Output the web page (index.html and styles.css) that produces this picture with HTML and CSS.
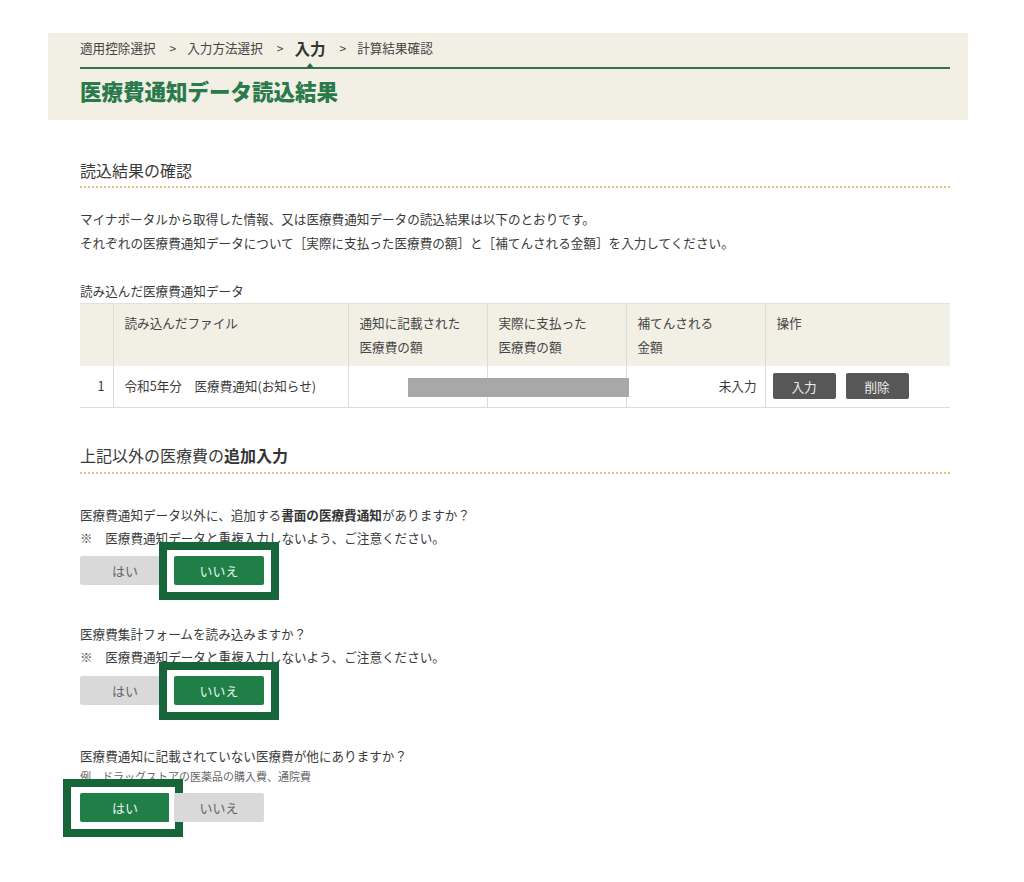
FILE: index.html
```html
<!DOCTYPE html>
<html lang="ja">
<head>
<meta charset="utf-8">
<title>医療費通知データ読込結果</title>
<link rel="stylesheet" href="styles.css">
</head>
<body>
<div class="page">
  <header class="band">
    <nav class="crumbs">
      <span>適用控除選択</span><span class="sep">&gt;</span>
      <span>入力方法選択</span><span class="sep">&gt;</span>
      <span class="current">入力</span><span class="sep">&gt;</span>
      <span>計算結果確認</span>
    </nav>
    <h1 class="title">医療費通知データ読込結果</h1>
  </header>

  <main class="content">
    <h2 class="sec-head">読込結果の確認</h2>
    <p class="lead">マイナポータルから取得した情報、又は医療費通知データの読込結果は以下のとおりです。<br>それぞれの医療費通知データについて［実際に支払った医療費の額］と［補てんされる金額］を入力してください。</p>

    <div class="tbl-label">読み込んだ医療費通知データ</div>
    <table class="tbl">
      <thead>
        <tr>
          <th class="c-no"></th>
          <th class="c-file">読み込んだファイル</th>
          <th class="c-amt">通知に記載された<br>医療費の額</th>
          <th class="c-amt">実際に支払った<br>医療費の額</th>
          <th class="c-amt">補てんされる<br>金額</th>
          <th class="c-op">操作</th>
        </tr>
      </thead>
      <tbody>
        <tr>
          <td class="num">1</td>
          <td>令和5年分　医療費通知(お知らせ)</td>
          <td class="redact-cell"><span class="redact"></span></td>
          <td></td>
          <td class="num">未入力</td>
          <td class="ops"><div class="ops-row"><button class="op-btn">入力</button><button class="op-btn">削除</button></div></td>
        </tr>
      </tbody>
    </table>

    <h2 class="sec-head sec2">上記以外の医療費の<b>追加入力</b></h2>

    <div class="q q1">
      <p class="q-text">医療費通知データ以外に、追加する<b>書面の医療費通知</b>がありますか？</p>
      <p class="q-note">※　医療費通知データと重複入力しないよう、ご注意ください。</p>
      <div class="choices">
        <button class="choice">はい</button>
        <button class="choice on hl">いいえ</button>
      </div>
    </div>

    <div class="q q2">
      <p class="q-text">医療費集計フォームを読み込みますか？</p>
      <p class="q-note">※　医療費通知データと重複入力しないよう、ご注意ください。</p>
      <div class="choices">
        <button class="choice">はい</button>
        <button class="choice on hl">いいえ</button>
      </div>
    </div>

    <div class="q q3">
      <p class="q-text">医療費通知に記載されていない医療費が他にありますか？</p>
      <p class="q-ex">例　ドラッグストアの医薬品の購入費、通院費</p>
      <div class="choices">
        <button class="choice on hl">はい</button>
        <button class="choice">いいえ</button>
      </div>
    </div>
  </main>
</div>
</body>
</html>
```

FILE: styles.css
```css
* { box-sizing: border-box; }
html, body { margin: 0; padding: 0; background: #fff; }
body {
  font-family: "Noto Sans CJK JP", "Noto Sans", sans-serif;
  color: #3a3a3a;
  font-size: 12.8px;
}
.page {
  margin-left: 48px;
  width: 920px;
  padding-top: 33px;
  padding-bottom: 40px;
}
.band {
  background: #f2f0e5;
  padding: 0 18px 14px 32px;
}
.crumbs {
  display: flex;
  align-items: center;
  padding-top: 5px;
  padding-bottom: 9px;
  line-height: 20px;
  border-bottom: 2px solid #3a6e4c;
  color: #444;
  font-size: 12.6px;
}
.crumbs .sep { margin: 0 11px 0 14px; font-size: 12px; }
.crumbs .current {
  position: relative;
  font-weight: bold;
  font-size: 15.5px;
  color: #2c3a30;
}
.crumbs .current::after {
  content: "";
  position: absolute;
  left: 50%;
  bottom: -10px;
  margin-left: -4px;
  border-left: 4px solid transparent;
  border-right: 4px solid transparent;
  border-bottom: 5px solid #2f6a45;
}
.title {
  margin: 7px 0 0;
  font-size: 21.5px;
  line-height: 30px;
  font-weight: 900;
  color: #2b7a4b;
}
.content {
  padding: 0 18px 0 32px;
}
.sec-head {
  margin: 38px 0 0;
  font-size: 16px;
  line-height: 24px;
  font-weight: normal;
  color: #3a3a3a;
  padding-bottom: 4px;
  border-bottom: 2px dotted #dcc987;
}
.sec-head b { font-weight: bold; color: #333; }
.sec2 { margin-top: 35px; padding-bottom: 5px; }
.lead {
  margin: 19px 0 0;
  line-height: 24px;
  font-size: 12.6px;
}
.tbl-label {
  margin-top: 26px;
  line-height: 20px;
  font-size: 12.6px;
}
.tbl {
  margin-top: 2px;
  width: 100%;
  border-collapse: collapse;
  font-size: 12.6px;
}
.tbl th {
  background: #f2f0e5;
  font-weight: normal;
  text-align: left;
  vertical-align: top;
  height: 62px;
  padding: 7px 10px 0 11px;
  line-height: 24px;
  color: #444;
  border-top: 1px solid #e4e2d8;
  border-left: 1px solid #deddd5;
}
.tbl th:first-child, .tbl td:first-child { border-left: none; }
.tbl td {
  height: 42px;
  padding: 0 8px 0 11px;
  line-height: 20px;
  border-left: 1px solid #deddd5;
  border-bottom: 1px solid #dcdcdc;
  color: #3a3a3a;
}
.tbl .c-no { width: 33px; }
.tbl .c-file { width: 235px; }
.tbl .c-amt { width: 139px; }
.tbl td.num { text-align: right; padding-right: 8px; }
.redact-cell { position: relative; }
.redact {
  position: absolute;
  left: 59px;
  top: 12px;
  width: 221px;
  height: 19px;
  background: #a8a8a8;
}
.tbl td.ops { padding-left: 7px; }
.ops-row { display: flex; gap: 10px; }
.op-btn {
  font-family: inherit;
  border: none;
  border-radius: 2px;
  background: #575757;
  color: #eee;
  font-size: 12.6px;
  width: 63px;
  height: 26px;
  padding: 0;
}
.q p { margin: 0; }
.q1 { margin-top: 29px; }
.q2 { margin-top: 37px; }
.q3 { margin-top: 39px; }
.q-text { line-height: 24px; font-size: 12.6px; }
.q-text b { font-weight: bold; color: #333; }
.q-note { line-height: 22px; font-size: 12.6px; }
.q-ex { line-height: 16px; font-size: 11px; color: #666; }
.choices {
  display: flex;
  gap: 4px;
  margin-top: 7px;
}
.q2 .choices { margin-top: 8px; }
.q3 .choices { margin-top: 9px; }
.choice {
  position: relative;
  font-family: inherit;
  width: 90px;
  height: 29px;
  border: none;
  border-radius: 2px;
  background: #d9d9d9;
  color: #666;
  font-size: 13px;
  padding: 0;
}
.choice.on {
  background: #1f7f47;
  color: #e9f4ec;
}
.choice.hl::after {
  content: "";
  position: absolute;
  left: -15px;
  right: -15px;
  top: -14px;
  bottom: -15px;
  border: 8px solid #17663a;
  box-shadow: inset 0 0 0 6px #fff;
  pointer-events: none;
}
.q3 .choice.hl::after { left: -17px; right: -13px; }
```
